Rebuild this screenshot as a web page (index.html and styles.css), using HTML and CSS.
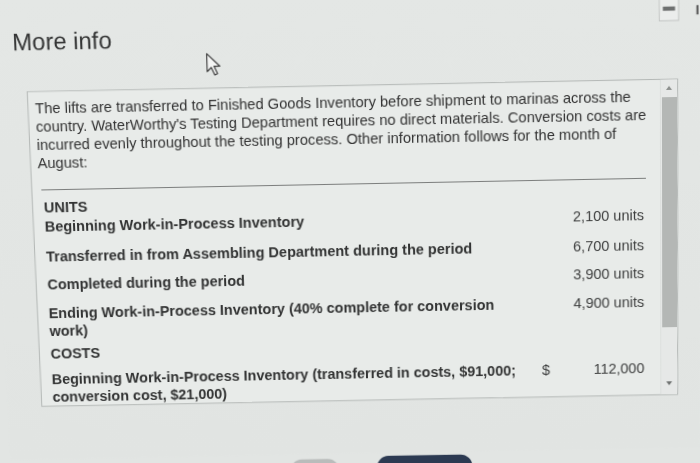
FILE: index.html
```html
<!DOCTYPE html>
<html lang="en">
<head>
<meta charset="utf-8">
<title>More info</title>
<link rel="stylesheet" href="styles.css">
</head>
<body>
<div class="photo">
<div class="screen">
  <div class="win-ctl"><span class="min-bar"></span></div>
  <span class="edge-mark"></span>
  <h1 class="title">More info</h1>
  <svg class="cursor" width="18" height="25" viewBox="0 0 14 20" aria-hidden="true">
    <path d="M1.5 1.5 L1.5 15.5 L4.8 12.3 L7.4 18.2 L9.6 17.2 L7 11.4 L11.6 11.4 Z" fill="#f4f5f4" stroke="#3a3a3a" stroke-width="0.9" stroke-linejoin="round"/>
  </svg>
  <div class="info-box">
    <div class="content">
      <p class="intro">The lifts are transferred to Finished Goods Inventory before shipment to marinas across the country. WaterWorthy's Testing Department requires no direct materials. Conversion costs are incurred evenly throughout the testing process. Other information follows for the month of August:</p>
      <div class="data">
        <table class="data-table">
          <colgroup><col class="c-label"><col class="c-cur"><col class="c-val"></colgroup>
          <tr class="hd"><td class="label">UNITS</td><td></td><td></td></tr>
          <tr class="row first"><td class="label">Beginning Work-in-Process Inventory</td><td></td><td class="val">2,100 units</td></tr>
          <tr class="row"><td class="label">Transferred in from Assembling Department during the period</td><td></td><td class="val">6,700 units</td></tr>
          <tr class="row"><td class="label">Completed during the period</td><td></td><td class="val">3,900 units</td></tr>
          <tr class="row tail"><td class="label">Ending Work-in-Process Inventory (40% complete for conversion work)</td><td></td><td class="val">4,900 units</td></tr>
          <tr class="hd gap"><td class="label">COSTS</td><td></td><td></td></tr>
          <tr class="row"><td class="label">Beginning Work-in-Process Inventory (transferred in costs, $91,000; conversion cost, $21,000)</td><td class="cur">$</td><td class="val">112,000</td></tr>
        </table>
      </div>
    </div>
    <div class="scrollbar">
      <span class="arrow up"></span>
      <span class="thumb"></span>
      <span class="arrow down"></span>
    </div>
  </div>
  <div class="footer">
    <span class="btn light"></span>
    <span class="btn dark"></span>
  </div>
</div>
</div>
</body>
</html>
```

FILE: styles.css
```css
html, body {
  margin: 0;
  padding: 0;
  overflow: hidden;
  background: #e2e5e3;
}

body {
  width: 700px;
  height: 463px;
  font-family: "Liberation Sans", Arial, sans-serif;
  color: #333;
}

/* camera perspective of the photographed screen */
.photo {
  height: 463px;
  transform: perspective(300px) rotateX(-1.24deg);
  transform-origin: 412px 248px;
}

.screen {
  position: relative;
  height: 463px;
  padding-top: 31px;
  box-sizing: border-box;
  transform: rotate(-1.1deg);
  transform-origin: 27px 248px;
  background: linear-gradient(180deg, #e4e7e5 0%, #e1e4e2 100%);
}

.title {
  margin: 0 0 0 22px;
  font-size: 23.5px;
  line-height: 28px;
  font-weight: normal;
  color: #343535;
}

.cursor {
  position: absolute;
  left: 211px;
  top: 57.5px;
}

.win-ctl {
  position: absolute;
  left: 659px;
  top: 4px;
  width: 20px;
  height: 33px;
  box-sizing: border-box;
  border: 1px solid #c3c6c4;
  background: #ebedec;
}

.min-bar {
  position: absolute;
  left: 3px;
  right: 3px;
  bottom: 9px;
  height: 4px;
  background: #6e7070;
}

.edge-mark {
  position: absolute;
  left: 696px;
  top: 22px;
  width: 2px;
  height: 9px;
  background: #555;
}

.info-box {
  display: flex;
  margin: 33.5px 0 0 33.5px;
  width: 644.5px;
  height: 316.5px;
  box-sizing: border-box;
  border: 1px solid #b4b8b6;
  background: #e8ebe9;
  overflow: hidden;
}

.content {
  flex: 1;
  padding: 7px 9px 0 7px;
  overflow: hidden;
}

.intro {
  margin: 0;
  font-size: 14.6px;
  line-height: 18.1px;
  color: #333;
}

.data {
  margin: 17.6px 5px 0 2.2px;
  padding-top: 7.9px;
  border-top: 1px solid #7c7e7d;
}

.data-table {
  width: 100%;
  table-layout: fixed;
  border-collapse: collapse;
  font-size: 14.5px;
  line-height: 18.5px;
}

.c-label { width: 484px; }
.c-cur { width: 40px; }

.data-table td {
  padding: 0;
  vertical-align: top;
}

.data-table .label {
  padding-left: 2px;
  font-weight: bold;
  color: #323333;
}

.data-table .cur {
  padding-left: 13px;
  color: #3d3e3e;
}

.data-table .val {
  padding-right: 2px;
  text-align: right;
  color: #3d3e3e;
}

.hd td { padding-bottom: 0.5px; }
.hd.gap td { padding-bottom: 7.5px; }
.row td { padding-bottom: 10px; }
.row.first td { padding-bottom: 11px; }
.row.tail td { padding-bottom: 4px; }

.scrollbar {
  display: flex;
  flex-direction: column;
  align-items: center;
  width: 17px;
  background: #e6e8e7;
  border-left: 1px solid #dcdfdd;
  box-sizing: border-box;
}

.arrow {
  width: 0;
  height: 0;
  border-left: 3px solid transparent;
  border-right: 3px solid transparent;
}

.arrow.up {
  margin: 6px 0 7.2px;
  border-bottom: 4px solid #8d908e;
}

.arrow.down {
  margin-top: 55px;
  border-top: 4px solid #6f7271;
}

.thumb {
  width: 15px;
  height: 229px;
  background: #b4b7b5;
}

.footer {
  display: flex;
  align-items: flex-start;
  gap: 38px;
  margin-top: 57px;
  padding-left: 284px;
}

.btn {
  display: block;
  height: 30px;
  border-radius: 12px 12px 0 0;
}

.btn.light {
  width: 50px;
  margin-top: 2px;
  background: #b9bcbb;
}

.btn.dark {
  width: 97px;
  background: #2c3a52;
}
```
